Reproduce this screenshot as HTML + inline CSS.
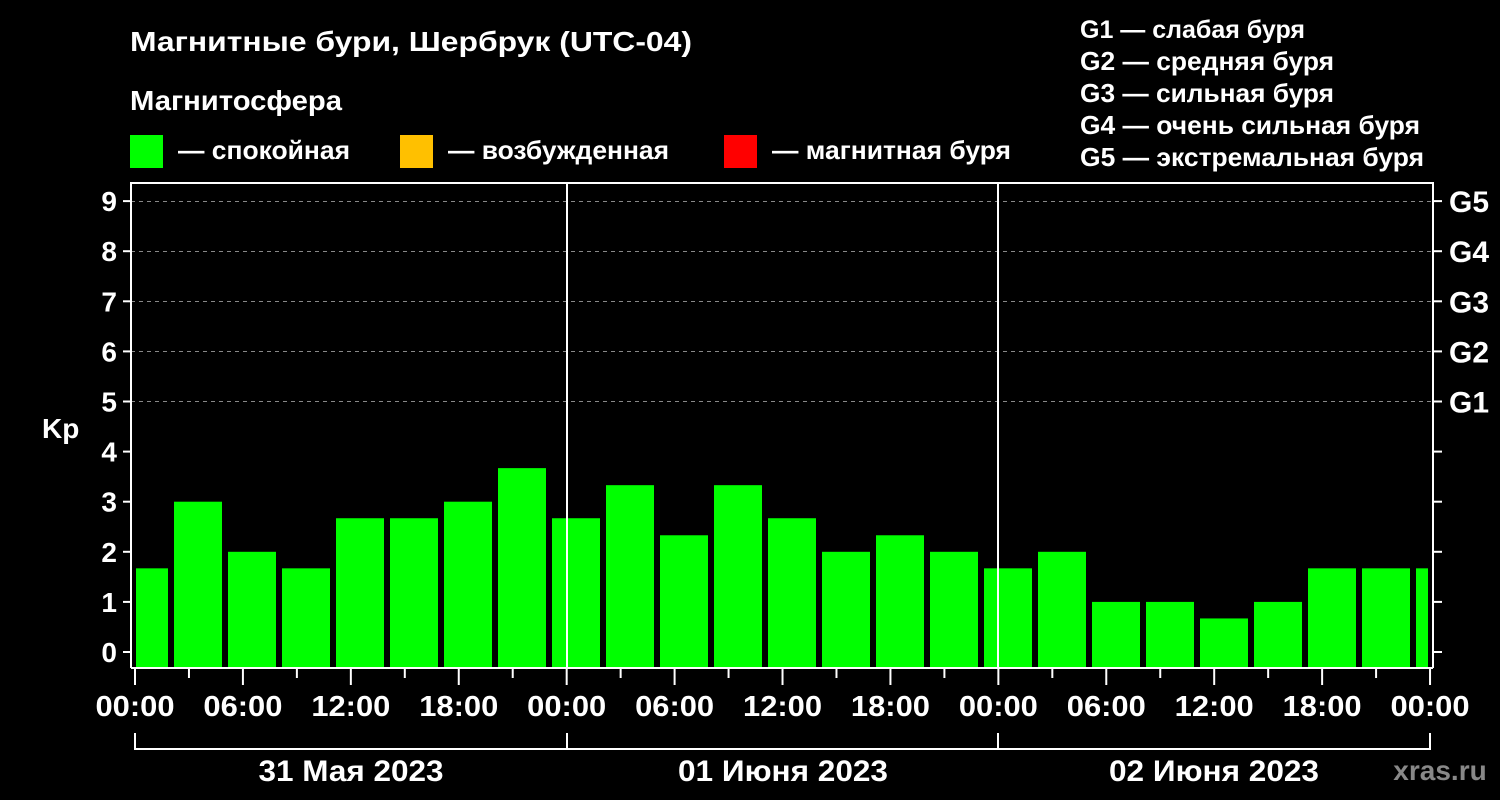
<!DOCTYPE html>
<html><head><meta charset="utf-8"><style>body{margin:0;background:#000}svg{display:block}text{font-family:"Liberation Sans",sans-serif;font-weight:bold;fill:#fff}</style></head><body>
<svg width="1500" height="800" xmlns="http://www.w3.org/2000/svg">
<rect width="1500" height="800" fill="#000"/>
<text x="130" y="51" font-size="28" textLength="562" lengthAdjust="spacingAndGlyphs">Магнитные бури, Шербрук (UTC-04)</text>
<text x="130" y="110" font-size="28" textLength="212" lengthAdjust="spacingAndGlyphs">Магнитосфера</text>
<rect x="130" y="135" width="33" height="33" fill="#00ff00"/>
<text x="178" y="159" font-size="26" textLength="172" lengthAdjust="spacingAndGlyphs">— спокойная</text>
<rect x="400" y="135" width="33" height="33" fill="#ffc000"/>
<text x="448" y="159" font-size="26" textLength="221" lengthAdjust="spacingAndGlyphs">— возбужденная</text>
<rect x="724" y="135" width="33" height="33" fill="#ff0000"/>
<text x="772" y="159" font-size="26" textLength="239" lengthAdjust="spacingAndGlyphs">— магнитная буря</text>
<g font-size="26">
<text x="1080" y="38" font-size="25">G1 — слабая буря</text>
<text x="1080" y="70" textLength="254" lengthAdjust="spacingAndGlyphs">G2 — средняя буря</text>
<text x="1080" y="102" textLength="254" lengthAdjust="spacingAndGlyphs">G3 — сильная буря</text>
<text x="1080" y="134" textLength="340" lengthAdjust="spacingAndGlyphs">G4 — очень сильная буря</text>
<text x="1080" y="166" textLength="344" lengthAdjust="spacingAndGlyphs">G5 — экстремальная буря</text>
</g>
<g id="bars" fill="#00ff00"></g>
<g stroke="#888" stroke-dasharray="4,4" stroke-width="1">
<line x1="131" x2="1433" y1="201.5" y2="201.5"/><line x1="131" x2="1433" y1="251.5" y2="251.5"/><line x1="131" x2="1433" y1="301.5" y2="301.5"/><line x1="131" x2="1433" y1="351.5" y2="351.5"/><line x1="131" x2="1433" y1="401.5" y2="401.5"/>
</g>
<g id="ax" stroke="#fff" stroke-width="2" fill="none">
<path d="M131 668V183H1433V668M131 668H1433"/>
<line x1="567" x2="567" y1="183" y2="668"/><line x1="998" x2="998" y1="183" y2="668"/>
<path d="M135 733V749H1430V733M567 733V749M998 733V749"/>
</g>
<g font-size="28" text-anchor="end" id="yl"></g>
<text x="42" y="438" font-size="28">Kp</text>
<g font-size="30" id="gl"></g>
<g font-size="29" text-anchor="middle" id="xl"></g>
<g font-size="30" text-anchor="middle">
<text x="351" y="781" textLength="185" lengthAdjust="spacingAndGlyphs">31 Мая 2023</text>
<text x="783" y="781" textLength="210" lengthAdjust="spacingAndGlyphs">01 Июня 2023</text>
<text x="1214" y="781" textLength="210" lengthAdjust="spacingAndGlyphs">02 Июня 2023</text>
</g>
<text x="1440" y="780" font-size="28" style="fill:#888" text-anchor="middle">xras.ru</text>
</svg>
<script>
const ns="http://www.w3.org/2000/svg";
function el(p,t,a,txt){const e=document.createElementNS(ns,t);for(const k in a)e.setAttribute(k,a[k]);if(txt)e.textContent=txt;document.getElementById(p).appendChild(e);}
const v=[1.67,3,2,1.67,2.67,2.67,3,3.67,2.67,3.33,2.33,3.33,2.67,2,2.33,2,1.67,2,1,1,0.67,1,1.67,1.67,1.67];
v.forEach((k,i)=>{let l=120+54*i,r=l+48;l=Math.max(l,136);r=Math.min(r,1428);const t=652-50.1*k;el("bars","rect",{x:l,y:t,width:r-l,height:668-t});});
for(let k=0;k<=9;k++){const y=652-50.1*k;el("ax","line",{x1:123,x2:131,y1:y,y2:y});el("ax","line",{x1:1433,x2:1442,y1:y,y2:y});el("yl","text",{x:117,y:y+10},String(k));}
["G1","G2","G3","G4","G5"].forEach((g,i)=>{const y=652-50.1*(5+i);el("gl","text",{x:1449,y:y+11},g);});
const lab=["00:00","06:00","12:00","18:00"];
for(let i=0;i<=24;i++){const x=135+53.96*i;el("ax","line",{x1:x,x2:x,y1:668,y2:i%2?678:685});if(i%2==0){el("xl","text",{x:x,y:716,textLength:79,lengthAdjust:"spacingAndGlyphs"},lab[(i/2)%4]);}}
</script>
</body></html>
